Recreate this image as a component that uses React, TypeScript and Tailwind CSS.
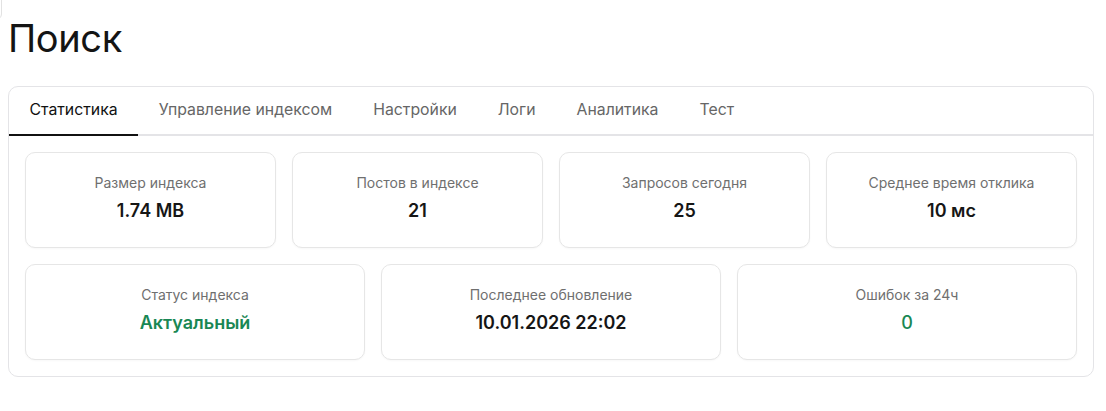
const tabs = ["Статистика", "Управление индексом", "Настройки", "Логи", "Аналитика", "Тест"];

const topStats = [
  { label: "Размер индекса", value: "1.74 MB" },
  { label: "Постов в индексе", value: "21" },
  { label: "Запросов сегодня", value: "25" },
  { label: "Среднее время отклика", value: "10 мс" },
];

const bottomStats = [
  { label: "Статус индекса", value: "Актуальный", green: true },
  { label: "Последнее обновление", value: "10.01.2026 22:02" },
  { label: "Ошибок за 24ч", value: "0", green: true, normal: true },
];

function StatCard({ label, value, green, normal }: { label: string; value: string; green?: boolean; normal?: boolean }) {
  return (
    <div className="flex flex-col items-center rounded-[10px] border border-[#e6e6e6] bg-white pt-[20px] pb-[22px] shadow-[0_1px_2px_rgba(0,0,0,0.03)]">
      <div className="text-[14px] leading-5 text-[#6f6f6f]">{label}</div>
      <div
        className={`mt-1 text-[18px] leading-7 ${normal ? "font-medium" : "font-semibold"} ${
          green ? "text-[#198754]" : "text-[#161616]"
        }`}
      >
        {value}
      </div>
    </div>
  );
}

export default function App() {
  return (
    <div className="relative min-h-[411px] bg-white pl-2 pr-3 pt-[14px] font-['Inter',sans-serif]">
      <div className="absolute -left-[20px] -top-[10px] h-[30px] w-[22px] rounded-md border border-[#e2e2e2]" />
      <h1 className="text-[38px] font-normal leading-[48px] tracking-[-0.01em] text-[#141414]">Поиск</h1>

      <div className="mt-[24px] rounded-[10px] border border-[#e4e4e7] bg-white">
        <div className="flex border-b-2 border-[#e4e4e7]">
          {tabs.map((t, i) => (
            <div
              key={t}
              className={`-mb-[2px] px-[20.5px] pt-[12px] pb-[13px] text-[15.8px] leading-[22px] ${
                i === 0 ? "border-b-2 border-[#111] text-[#111]" : "text-[#666]"
              }`}
            >
              {t}
            </div>
          ))}
        </div>

        <div className="flex flex-col gap-4 p-4">
          <div className="grid grid-cols-4 gap-4">
            {topStats.map((s) => (
              <StatCard key={s.label} label={s.label} value={s.value} />
            ))}
          </div>
          <div className="grid grid-cols-3 gap-4">
            {bottomStats.map((s) => (
              <StatCard key={s.label} label={s.label} value={s.value} green={s.green} normal={s.normal} />
            ))}
          </div>
        </div>
      </div>
    </div>
  );
}
